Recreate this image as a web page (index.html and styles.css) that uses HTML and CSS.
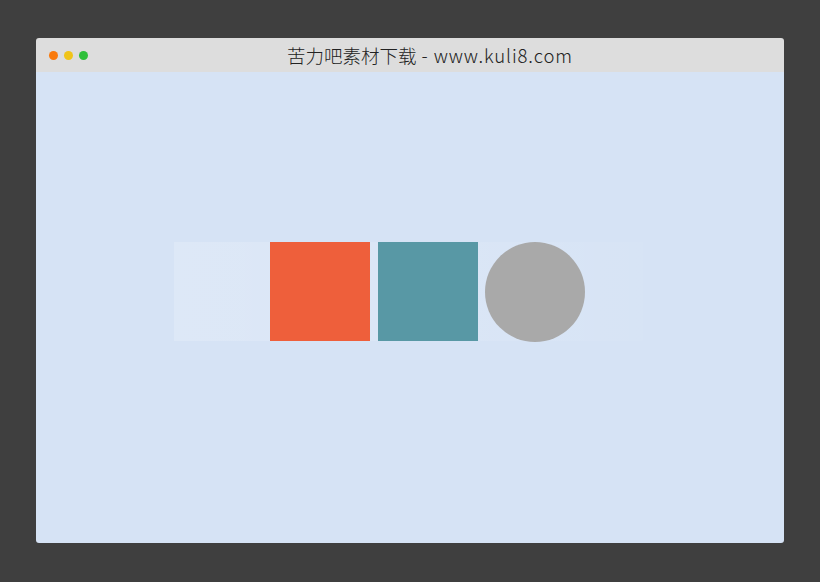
FILE: index.html
```html
<!DOCTYPE html>
<html lang="zh">
<head>
  <meta charset="UTF-8" />
  <title>苦力吧素材下载</title>
  <link rel="stylesheet" href="styles.css">
</head>
<body>
  <div class="window">
    <div class="titlebar">
      <div class="dots">
        <span class="dot orange"></span>
        <span class="dot yellow"></span>
        <span class="dot green"></span>
      </div>
      <div class="title">苦力吧素材下载<span class="site"> - www.kuli8.com</span></div>
    </div>
    <div class="content">
      <div class="strip">
        <div class="item blank"></div>
        <div class="item square red"></div>
        <div class="item square teal"></div>
        <div class="item circle"></div>
      </div>
    </div>
  </div>
</body>
</html>
```

FILE: styles.css
```css
body {
  margin: 0;
  background-color: #3f3f3f;
  font-family: 'Noto Sans CJK SC', 'Noto Sans', sans-serif;
}

.window {
  width: 748px;
  margin: 38px 0 0 36px;
  border-radius: 3px;
  overflow: hidden;
}

.titlebar {
  height: 34px;
  background: #dddddd;
  display: flex;
  align-items: center;
}

.dots {
  display: flex;
  gap: 6px;
  padding-left: 13px;
}

.dot {
  width: 9px;
  height: 9px;
  border-radius: 50%;
}

.orange { background: #f97a0c; }
.yellow { background: #f0c419; }
.green { background: #2fbf3a; }

.title {
  flex: 1;
  text-align: center;
  padding-right: 12px;
  font-size: 18.5px;
  font-weight: 300;
  color: #222222;
  white-space: nowrap;
}

.site {
  letter-spacing: 0.9px;
}

.content {
  height: 471px;
  background: #d6e3f5;
  display: flex;
  padding-left: 138px;
  padding-top: 170px;
  box-sizing: border-box;
}

.strip {
  width: 469px;
  height: 99px;
  display: flex;
  gap: 8px;
  background: linear-gradient(to right, rgba(255, 255, 255, 0.18), rgba(255, 255, 255, 0.1) 60%, rgba(255, 255, 255, 0.03));
}

.item {
  width: 100px;
  height: 99px;
  flex: none;
}

.blank {
  width: 88px;
}

.red { background: #ee5f3b; }
.teal { background: #5898a5; }

.circle {
  margin-left: -1px;
  background: #a9a9a9;
  border-radius: 50%;
  height: 100px;
}
```
